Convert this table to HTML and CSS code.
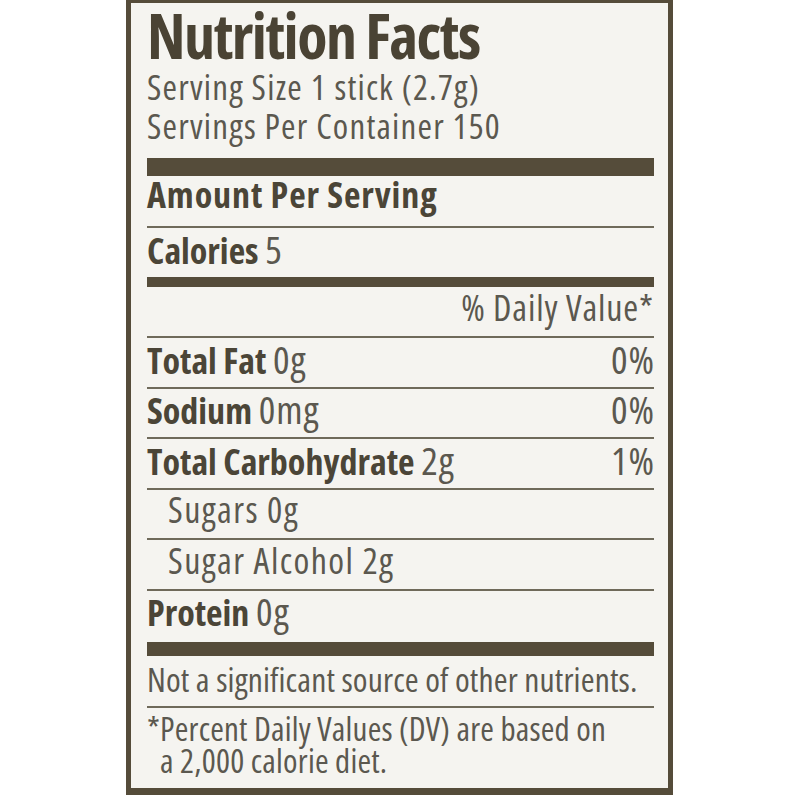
FILE: index.html
```html
<!DOCTYPE html>
<html lang="en">
<head>
<meta charset="utf-8">
<title>Nutrition Facts</title>
<link rel="stylesheet" href="styles.css">
</head>
<body>
<section class="label">
  <h1 class="title">Nutrition Facts</h1>
  <div class="serving">
    <p>Serving Size 1 stick (2.7g)</p>
    <p>Servings Per Container 150</p>
  </div>
  <div class="bar-thick"></div>
  <div class="row row-amount"><b>Amount Per Serving</b></div>
  <div class="row row-calories"><span><b>Calories</b> <span class="num">5</span></span></div>
  <div class="row row-dv"><span></span><span class="dv">% Daily Value*</span></div>
  <div class="row"><span><b>Total Fat</b> <span class="num">0g</span></span><span class="num pct">0%</span></div>
  <div class="row"><span><b>Sodium</b> <span class="num">0mg</span></span><span class="num pct">0%</span></div>
  <div class="row"><span><b>Total Carbohydrate</b> <span class="num">2g</span></span><span class="num pct">1%</span></div>
  <div class="row row-sub"><span>Sugars 0g</span></div>
  <div class="row row-sub"><span>Sugar Alcohol 2g</span></div>
  <div class="row row-protein"><span><b>Protein</b> <span class="num">0g</span></span></div>
  <p class="note">Not a significant source of other nutrients.</p>
  <p class="foot">*Percent Daily Values (DV) are based on<br><span class="indent">a 2,000 calorie diet.</span></p>
</section>
</body>
</html>
```

FILE: styles.css
```css
html, body {
  margin: 0;
  padding: 0;
  background: #ffffff;
}

body {
  font-family: "Open Sans", "Liberation Sans", sans-serif;
  font-stretch: 75%;
  color: #5b584f;
}

.label {
  box-sizing: border-box;
  width: 547px;
  height: 797px;
  margin: -2px 0 0 126px;
  padding: 1px 14px 0 16px;
  background: #f5f4f0;
  border: 5px solid #554c3a;
  border-bottom-width: 7px;
  display: flex;
  flex-direction: column;
}

p { margin: 0; }

b {
  font-weight: 700;
  color: #4b4537;
}

.num {
  font-size: 39px;
  letter-spacing: 1px;
}

.pct {
  margin-right: -1px;
}

.title {
  margin: 0;
  font-size: 62px;
  line-height: 63px;
  font-weight: 700;
  color: #4a4334;
  letter-spacing: -1.5px;
  white-space: nowrap;
}

.serving {
  font-size: 35px;
  line-height: 39px;
  letter-spacing: 1.2px;
  white-space: nowrap;
}

.bar-thick {
  margin-top: 13px;
  height: 18px;
  background: #554c3a;
}

.row {
  box-sizing: border-box;
  height: 50.6px;
  padding-top: 2.5px;
  display: flex;
  justify-content: space-between;
  align-items: flex-start;
  font-size: 36px;
  line-height: 36px;
  border-bottom: 2px solid #6f6a5a;
  white-space: nowrap;
}

.row-amount {
  height: 52px;
  padding-top: 1px;
  letter-spacing: 0.9px;
}

.row-calories {
  height: 59px;
  padding-top: 3px;
  border-bottom: 10px solid #554c3a;
}

.row-dv {
  height: 51px;
  padding-top: 3px;
}

.dv {
  letter-spacing: 0.85px;
}

.row-sub span {
  padding-left: 21px;
  letter-spacing: 1.4px;
}

.row-protein {
  height: 65px;
  border-bottom: 14px solid #554c3a;
}

.note {
  box-sizing: border-box;
  height: 52px;
  padding-top: 7px;
  font-size: 33.5px;
  line-height: 32px;
  letter-spacing: 0.15px;
  border-bottom: 2px solid #6f6a5a;
  white-space: nowrap;
}

.foot {
  padding-top: 5px;
  font-size: 33px;
  line-height: 32px;
  letter-spacing: 0.2px;
  white-space: nowrap;
}

.indent {
  padding-left: 13px;
}
```
